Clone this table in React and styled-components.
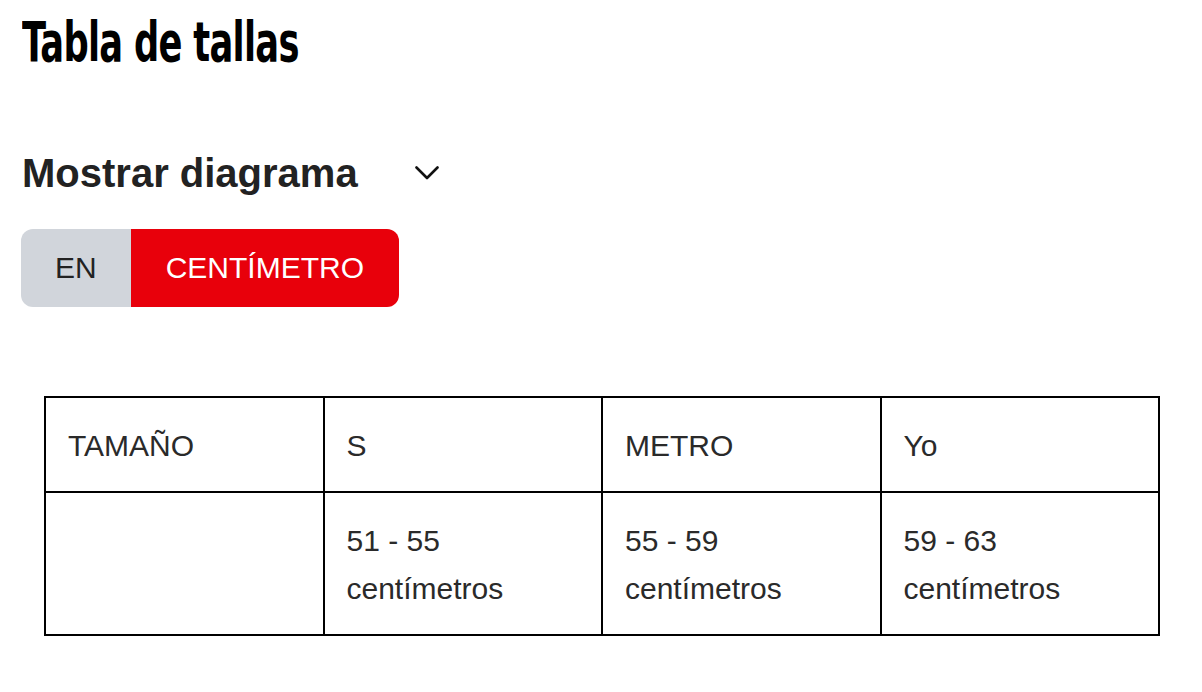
import styled, { createGlobalStyle } from "styled-components"

const GlobalStyle = createGlobalStyle`
    body {
        margin: 0;
        background: #fff;
        font-family: "Liberation Sans", Arial, sans-serif;
    }
`;

const Container = styled.div`
    padding: 0 22px;
`;

const Title = styled.h1`
    margin: 0;
    padding-top: 12px;
    font-family: "Liberation Sans Narrow", "DejaVu Sans Condensed", "Liberation Sans", sans-serif;
    font-weight: 700;
    font-size: 56px;
    line-height: 60px;
    color: #000;
    letter-spacing: -1px;
    transform: scaleX(0.7);
    transform-origin: left center;
`;

const DiagramToggle = styled.button`
    display: flex;
    align-items: center;
    gap: 57px;
    margin-top: 78px;
    padding: 0;
    border: none;
    background: none;
    font-family: "Liberation Sans", Arial, sans-serif;
    font-weight: 700;
    font-size: 40px;
    line-height: 46px;
    color: #222;
    cursor: pointer;
`;

const Chevron = styled.svg`
    width: 24px;
    height: 14px;
`;

const UnitSwitch = styled.div`
    display: inline-flex;
    margin-top: 33px;
    margin-left: -1px;
    border-radius: 12px;
    overflow: hidden;
`;

const UnitButton = styled.button`
    height: 78px;
    padding: 0 ${(p) => (p.active ? "35px" : "34px")};
    border: none;
    font-family: "Liberation Sans", Arial, sans-serif;
    font-size: 30px;
    background: ${(p) => (p.active ? "#e8000b" : "#d1d5db")};
    color: ${(p) => (p.active ? "#fff" : "#222")};
`;

const Table = styled.table`
    margin: 89px 0 0 22px;
    width: calc(100% - 42px);
    border-collapse: collapse;
    table-layout: fixed;
    font-size: 30px;
    line-height: 48px;
    color: #2a2a2a;
`;

const Cell = styled.td`
    border: 2px solid #000;
    padding: 24px 22px 21px;
    vertical-align: top;
    text-align: left;
`;

const sizes = [
    { name: "S", range: "51 - 55" },
    { name: "METRO", range: "55 - 59" },
    { name: "Yo", range: "59 - 63" },
];

const App = () => {
    return (
        <Container>
            <GlobalStyle />
            <Title>Tabla de tallas</Title>
            <DiagramToggle>
                Mostrar diagrama
                <Chevron viewBox="0 0 24 14" fill="none">
                    <polyline points="1.5,1.5 12,12 22.5,1.5" stroke="#111" strokeWidth="2.6" strokeLinecap="round" strokeLinejoin="round" />
                </Chevron>
            </DiagramToggle>
            <UnitSwitch>
                <UnitButton>EN</UnitButton>
                <UnitButton active>CENTÍMETRO</UnitButton>
            </UnitSwitch>
            <Table>
                <tbody>
                    <tr>
                        <Cell>TAMAÑO</Cell>
                        {sizes.map((s) => (
                            <Cell key={s.name}>{s.name}</Cell>
                        ))}
                    </tr>
                    <tr>
                        <Cell></Cell>
                        {sizes.map((s) => (
                            <Cell key={s.name}>
                                {s.range}
                                <br />
                                centímetros
                            </Cell>
                        ))}
                    </tr>
                </tbody>
            </Table>
        </Container>
    )
}

export default App;
